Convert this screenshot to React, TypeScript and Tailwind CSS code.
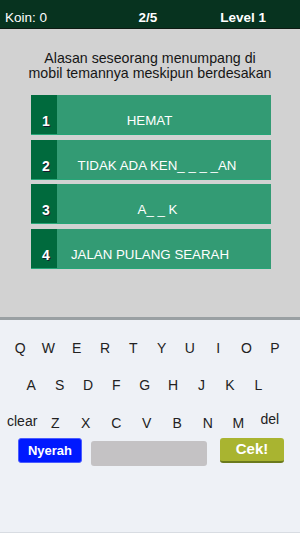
import React from "react";

const options = [
  { n: "1", t: "HEMAT", pr: "pr-[29px]" },
  { n: "2", t: "TIDAK ADA KEN_ _ _ _AN", pr: "pr-[14px]" },
  { n: "3", t: "A_ _ K", pr: "pr-[13px]" },
  { n: "4", t: "JALAN PULANG SEARAH", pr: "pr-[28px]" },
];

const row1 = ["Q", "W", "E", "R", "T", "Y", "U", "I", "O", "P"];
const row2 = ["A", "S", "D", "F", "G", "H", "J", "K", "L"];
const row3 = ["Z", "X", "C", "V", "B", "N", "M"];

export default function App() {
  return (
    <div
      className="w-[300px] h-[533px] overflow-hidden flex flex-col"
      style={{ fontFamily: '"Liberation Sans", Arial, sans-serif' }}
    >
      {/* Header */}
      <div className="h-[29px] shrink-0 bg-[#07331f] border-b border-[#0d1a12] flex items-start pt-[10px] px-[5px] text-white text-[13.5px] leading-[16px]">
        <div className="w-[100px]">Koin: 0</div>
        <div className="flex-1 text-center font-bold pr-[4px]">2/5</div>
        <div className="w-[100px] text-right font-bold pr-[29px]">Level 1</div>
      </div>

      {/* Question area */}
      <div className="h-[288px] shrink-0 bg-[#d2d2d2] pt-[22px] flex flex-col">
        <div className="text-center text-[14.2px] leading-[15px] text-[#161616]">
          Alasan seseorang menumpang di
          <br />
          mobil temannya meskipun berdesakan
        </div>
        <div className="mt-[14px] ml-[31px] w-[240px] flex flex-col gap-[4.6px]">
          {options.map((o) => (
            <div
              key={o.n}
              className="h-[40px] flex border-b border-[#26a577] bg-[#339b74]"
            >
              <div
                className="w-[26px] shrink-0 bg-[#006a3d] text-white font-bold text-[14px] leading-[16px] pt-[18px] text-center pl-[4px]"
                style={{ textShadow: "1px 1px 0 #1a1a2e" }}
              >
                {o.n}
              </div>
              <div
                className={`flex-1 flex justify-center text-white text-[13.3px] leading-[16px] pt-[18px] ${o.pr}`}
              >
                {o.t}
              </div>
            </div>
          ))}
        </div>
      </div>

      {/* Keyboard */}
      <div className="flex-1 bg-[#eef1f6] border-t-[3px] border-[#9aa0a3] flex flex-col relative">
        <div className="flex pl-[6px] pt-[20px] text-[14px] leading-[16px] text-[#222]">
          {row1.map((k) => (
            <div key={k} className="w-[28.3px] text-center">
              {k}
            </div>
          ))}
        </div>
        <div className="flex pl-[17px] pt-[21px] text-[14px] leading-[16px] text-[#222]">
          {row2.map((k) => (
            <div key={k} className="w-[28.4px] text-center">
              {k}
            </div>
          ))}
        </div>
        <div className="flex items-start pt-[20px] text-[14px] leading-[16px] text-[#222]">
          <div className="w-[40px] pl-[7px]">clear</div>
          {row3.map((k) => (
            <div key={k} className="w-[30.5px] text-center pt-[2px]">
              {k}
            </div>
          ))}
          <div className="pl-[7px] -mt-[2px]">del</div>
        </div>
        <div className="flex items-start pt-[7px]">
          <div className="ml-[18px] w-[64px] h-[25px] rounded-[3px] bg-[#0019ff] border border-[#4a5cff] text-white font-bold text-[13px] flex items-center justify-center">
            Nyerah
          </div>
          <div className="ml-[9px] mt-[3px] w-[116px] h-[25px] rounded-[3px] bg-[#c4c2c4]" />
          <div className="ml-[13px] w-[64px] h-[25px] rounded-[3px] bg-[#a9b430] border-b-2 border-[#6b7a1c] text-white font-bold text-[15px] flex items-center justify-center">
            Cek!
          </div>
        </div>
        <div className="absolute bottom-0 left-0 right-0 h-[1px] bg-[#d8dce2]" />
      </div>
    </div>
  );
}
